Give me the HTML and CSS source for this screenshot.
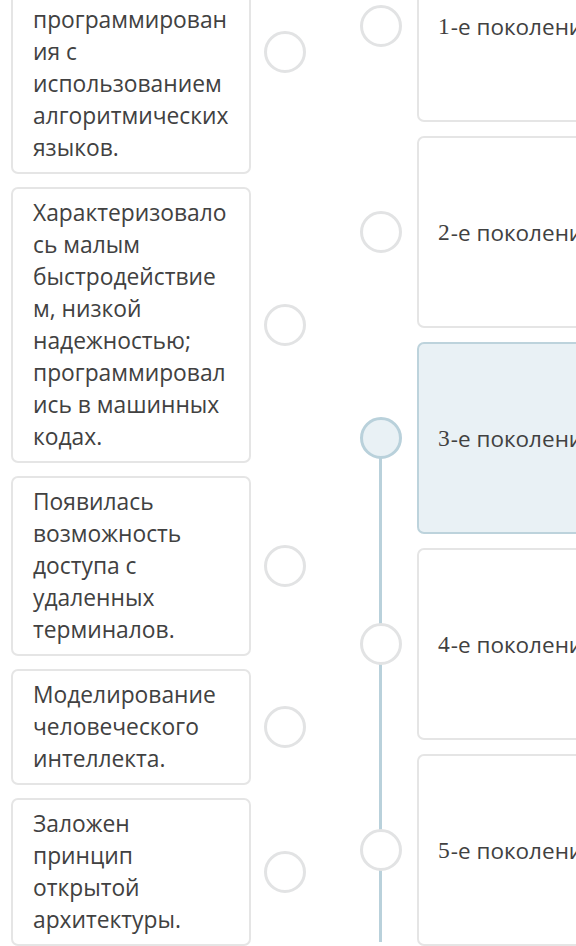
FILE: index.html
```html
<!DOCTYPE html>
<html lang="ru">
<head>
<meta charset="utf-8">
<title>Поколения ЭВМ</title>
<link rel="stylesheet" href="styles.css">
</head>
<body>
<div class="board">
  <div class="left">
    <div class="item">
      <div class="card">Появилась возможность программирования с использованием алгоритмических языков.</div>
      <span class="dot"></span>
    </div>
    <div class="item">
      <div class="card">Характеризовалось малым быстродействием, низкой надежностью; программировались в машинных кодах.</div>
      <span class="dot"></span>
    </div>
    <div class="item">
      <div class="card">Появилась возможность доступа с удаленных терминалов.</div>
      <span class="dot"></span>
    </div>
    <div class="item">
      <div class="card">Моделирование человеческого интеллекта.</div>
      <span class="dot"></span>
    </div>
    <div class="item">
      <div class="card">Заложен принцип открытой архитектуры.</div>
      <span class="dot"></span>
    </div>
  </div>
  <div class="right">
    <div class="gen">
      <span class="dot"></span>
      <div class="gcard"><span class="n">1</span>-е поколение</div>
    </div>
    <div class="gen">
      <span class="dot"></span>
      <div class="gcard"><span class="n">2</span>-е поколение</div>
    </div>
    <div class="gen active linked">
      <span class="dot"></span>
      <div class="gcard"><span class="n">3</span>-е поколение</div>
    </div>
    <div class="gen linked">
      <span class="dot"></span>
      <div class="gcard"><span class="n">4</span>-е поколение</div>
    </div>
    <div class="gen linked last">
      <span class="dot"></span>
      <div class="gcard"><span class="n">5</span>-е поколение</div>
    </div>
  </div>
</div>
</body>
</html>
```

FILE: styles.css
```css
html, body {
  margin: 0;
  padding: 0;
  background: #ffffff;
  overflow: hidden;
}

body {
  width: 576px;
  height: 946px;
  font-family: "Open Sans", "Noto Sans", sans-serif;
  color: #414141;
}

.board {
  display: flex;
  align-items: flex-start;
  margin-top: -70px;
  padding-left: 11px;
}

.left {
  display: flex;
  flex-direction: column;
  gap: 13px;
  width: 296px;
  flex: none;
}

.item {
  display: flex;
  align-items: center;
  gap: 13px;
}

.card {
  box-sizing: border-box;
  width: 240px;
  flex: none;
  padding: 8px 19px 8px 20px;
  border: 2px solid #e5e5e5;
  border-radius: 7px;
  font-size: 22.8px;
  line-height: 32px;
  overflow-wrap: anywhere;
  word-break: break-word;
}

.dot {
  box-sizing: border-box;
  width: 42px;
  height: 42px;
  flex: none;
  border: 3px solid #e2e3e4;
  border-radius: 50%;
  background: #ffffff;
  position: relative;
  z-index: 1;
}

.right {
  display: flex;
  flex-direction: column;
  gap: 14px;
  margin-left: 53px;
  flex: none;
}

.gen {
  display: flex;
  align-items: center;
  gap: 15px;
  height: 192px;
  position: relative;
}

.gen.linked::before {
  content: "";
  position: absolute;
  left: 19px;
  top: 50%;
  width: 3px;
  height: calc(100% + 14px);
  background: #b9d1db;
}

.gen.last::before {
  height: 92px;
}

.gcard {
  box-sizing: border-box;
  width: 260px;
  height: 192px;
  flex: none;
  display: flex;
  align-items: center;
  padding: 0 19px;
  border: 2px solid #e5e5e5;
  border-radius: 7px;
  font-size: 22.5px;
  white-space: nowrap;
  background: #ffffff;
}

.n {
  font-family: "Liberation Serif", "DejaVu Serif", serif;
  font-size: 23.5px;
  margin-right: 1px;
}

.gen.active .dot {
  border-color: #b9d1db;
  background: #e9f1f5;
}

.gen.active .gcard {
  background: #e9f1f5;
  border-color: #bdd3dc;
}
```
